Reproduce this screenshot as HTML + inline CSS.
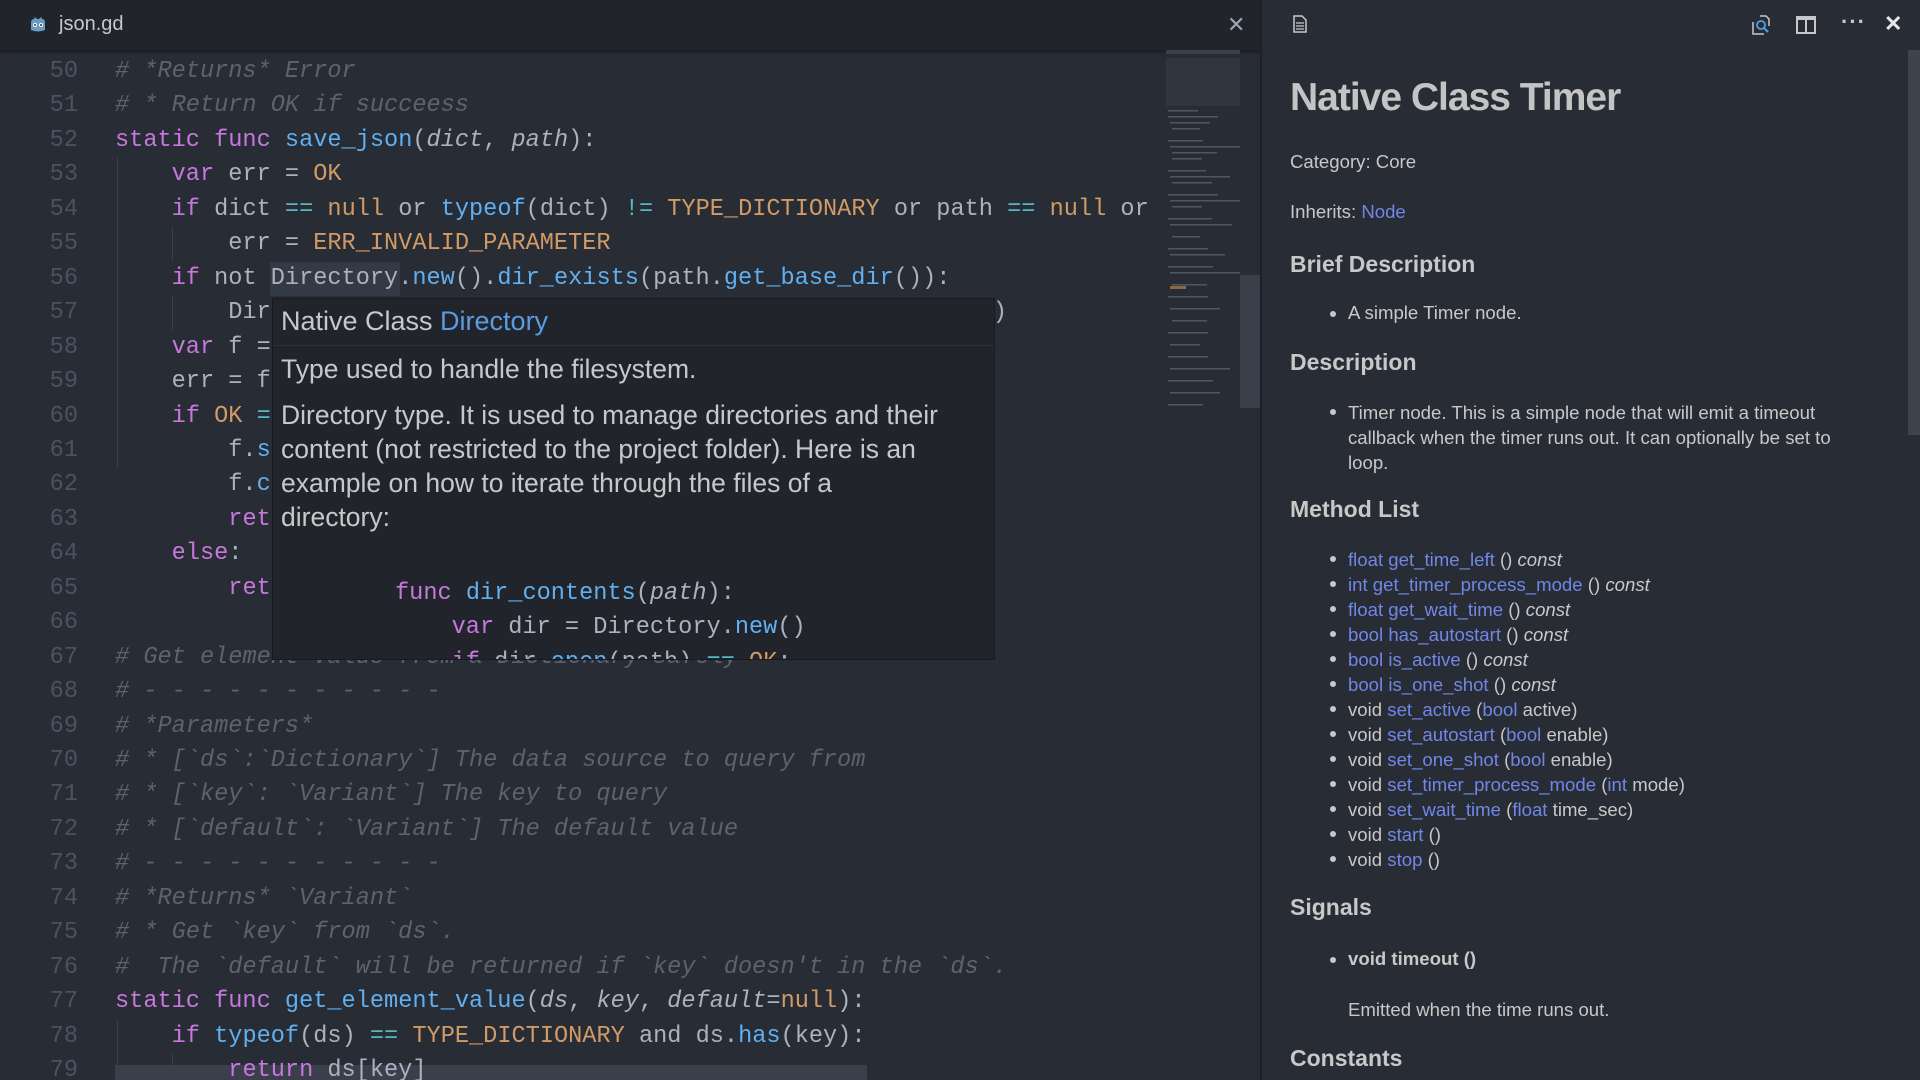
<!DOCTYPE html>
<html><head><meta charset="utf-8"><style>
*{margin:0;padding:0;box-sizing:border-box}
body{width:1920px;height:1080px;background:#282c34;overflow:hidden;position:relative;font-family:"Liberation Sans",sans-serif}
.tabbar{position:absolute;left:0;top:0;width:1260px;height:50px;background:#21252b;box-shadow:0 2px 3px #181a1f}
.code{position:absolute;left:0;top:55px;width:1166px;height:1025px;overflow:hidden;font-family:"Liberation Mono",monospace;font-size:23.6px;line-height:34.45px;color:#abb2bf;white-space:pre}
.ln{position:absolute;left:0;width:78px;text-align:right;color:#4b5263}
.tx{position:absolute;left:115px}
.c{color:#5c6370;font-style:italic}.k{color:#c678dd}.f{color:#61afef}.o{color:#d19a66}.p{font-style:italic}.op{color:#56b6c2}
.guide{position:absolute;width:1px;background:#3b4048}
.tip{position:absolute;left:272px;top:298px;width:723px;height:362px;background:#21252b;border:1px solid #181a1f;overflow:hidden;color:#c8c8c8}
.right{position:absolute;left:1260px;top:0;width:660px;height:1080px;background:#282c34;border-left:2px solid #1d2026;color:#c8c8c8;font-size:18.6px}
.r{position:absolute;left:28px;white-space:nowrap}
.h{font-size:23px;font-weight:bold;color:#c8c8c8}
.a{color:#7187e6}
.b::before{content:"";position:absolute;left:-18px;top:9px;width:6px;height:6px;border-radius:50%;background:#c8c8c8}
</style></head><body>
<div class="tabbar">
 <svg style="position:absolute;left:28px;top:15px" width="20" height="20" viewBox="0 0 20 20"><path d="M3 8 Q3 4 6 4 L7 2 L9 4 L11 4 L13 2 L14 4 Q17 4 17 8 L17 15 Q10 18 3 15Z" fill="#6a9bc4"/><circle cx="7" cy="10" r="2" fill="#fff"/><circle cx="13" cy="10" r="2" fill="#fff"/><circle cx="7" cy="10" r="1" fill="#333"/><circle cx="13" cy="10" r="1" fill="#333"/></svg>
 <div style="position:absolute;left:59px;top:13px;font-size:20px;color:#c8c8c8">json.gd</div>
 <div style="position:absolute;left:1227px;top:12px;font-size:22px;color:#9da5b4">✕</div>
</div>
<div class="code">
<div class="guide" style="left:117px;top:103px;height:310px"></div>
<div class="guide" style="left:172px;top:172px;height:34px"></div>
<div class="guide" style="left:172px;top:241px;height:34px"></div>
<div class="guide" style="left:117px;top:965px;height:62px"></div>
<div class="guide" style="left:172px;top:999px;height:34px"></div>
<div style="position:absolute;left:270px;top:207px;width:130px;height:34px;background:#343a45"></div>
<div style="position:absolute;left:115px;top:1010px;width:752px;height:20px;background:#3a3f4b"></div>
<div class="ln" style="top:0">50</div><div class="tx c" style="top:0"># *Returns* Error</div>
<div class="ln" style="top:34.45px">51</div><div class="tx c" style="top:34.45px"># * Return OK if succeess</div>
<div class="ln" style="top:68.9px">52</div><div class="tx" style="top:68.9px"><span class="k">static func</span> <span class="f">save_json</span>(<span class="p">dict</span>, <span class="p">path</span>):</div>
<div class="ln" style="top:103.35px">53</div><div class="tx" style="top:103.35px">    <span class="k">var</span> err = <span class="o">OK</span></div>
<div class="ln" style="top:137.8px">54</div><div class="tx" style="top:137.8px">    <span class="k">if</span> dict <span class="op">==</span> <span class="o">null</span> or <span class="f">typeof</span>(dict) <span class="op">!=</span> <span class="o">TYPE_DICTIONARY</span> or path <span class="op">==</span> <span class="o">null</span> or</div>
<div class="ln" style="top:172.25px">55</div><div class="tx" style="top:172.25px">        err = <span class="o">ERR_INVALID_PARAMETER</span></div>
<div class="ln" style="top:206.7px">56</div><div class="tx" style="top:206.7px">    <span class="k">if</span> not Directory.<span class="f">new</span>().<span class="f">dir_exists</span>(path.<span class="f">get_base_dir</span>()):</div>
<div class="ln" style="top:241.15px">57</div><div class="tx" style="top:241.15px">        Directory.new().make_dir_recursive(path.get_base_dir())</div>
<div class="ln" style="top:275.6px">58</div><div class="tx" style="top:275.6px">    <span class="k">var</span> f = File.new()</div>
<div class="ln" style="top:310.05px">59</div><div class="tx" style="top:310.05px">    err = f.open(path, File.WRITE)</div>
<div class="ln" style="top:344.5px">60</div><div class="tx" style="top:344.5px">    <span class="k">if</span> <span class="o">OK</span> <span class="op">==</span> err:</div>
<div class="ln" style="top:378.95px">61</div><div class="tx" style="top:378.95px">        f.<span class="f">store_string</span>()</div>
<div class="ln" style="top:413.4px">62</div><div class="tx" style="top:413.4px">        f.<span class="f">close</span>()</div>
<div class="ln" style="top:447.85px">63</div><div class="tx" style="top:447.85px">        <span class="k">return</span> OK</div>
<div class="ln" style="top:482.3px">64</div><div class="tx" style="top:482.3px">    <span class="k">else</span>:</div>
<div class="ln" style="top:516.75px">65</div><div class="tx" style="top:516.75px">        <span class="k">return</span> err</div>
<div class="ln" style="top:551.2px">66</div>
<div class="ln" style="top:585.65px">67</div><div class="tx c" style="top:585.65px"># Get element value from a Dictionary safely</div>
<div class="ln" style="top:620.1px">68</div><div class="tx c" style="top:620.1px"># - - - - - - - - - - -</div>
<div class="ln" style="top:654.55px">69</div><div class="tx c" style="top:654.55px"># *Parameters*</div>
<div class="ln" style="top:689px">70</div><div class="tx c" style="top:689px"># * [`ds`:`Dictionary`] The data source to query from</div>
<div class="ln" style="top:723.45px">71</div><div class="tx c" style="top:723.45px"># * [`key`: `Variant`] The key to query</div>
<div class="ln" style="top:757.9px">72</div><div class="tx c" style="top:757.9px"># * [`default`: `Variant`] The default value</div>
<div class="ln" style="top:792.35px">73</div><div class="tx c" style="top:792.35px"># - - - - - - - - - - -</div>
<div class="ln" style="top:826.8px">74</div><div class="tx c" style="top:826.8px"># *Returns* `Variant`</div>
<div class="ln" style="top:861.25px">75</div><div class="tx c" style="top:861.25px"># * Get `key` from `ds`.</div>
<div class="ln" style="top:895.7px">76</div><div class="tx c" style="top:895.7px">#  The `default` will be returned if `key` doesn't in the `ds`.</div>
<div class="ln" style="top:930.15px">77</div><div class="tx" style="top:930.15px"><span class="k">static func</span> <span class="f">get_element_value</span>(<span class="p">ds</span>, <span class="p">key</span>, <span class="p">default</span>=<span class="o">null</span>):</div>
<div class="ln" style="top:964.6px">78</div><div class="tx" style="top:964.6px">    <span class="k">if</span> <span class="f">typeof</span>(ds) <span class="op">==</span> <span class="o">TYPE_DICTIONARY</span> and ds.<span class="f">has</span>(key):</div>
<div class="ln" style="top:999.05px">79</div><div class="tx" style="top:999.05px">        <span class="k">return</span> ds[key]</div>
</div>
<div class="tip">
 <div style="position:absolute;left:8px;top:7px;font-size:27px;white-space:nowrap">Native Class <span style="color:#5b9be0">Directory</span></div>
 <div style="position:absolute;left:0;top:46px;width:100%;height:1px;background:#2c313a"></div>
 <div style="position:absolute;left:8px;top:55px;font-size:26.5px;white-space:nowrap">Type used to handle the filesystem.</div>
 <div style="position:absolute;left:8px;top:99px;font-size:26.5px;line-height:34px;width:700px">Directory type. It is used to manage directories and their content (not restricted to the project folder). Here is an example on how to iterate through the files of a<br>directory:</div>
 <div style="position:absolute;left:122px;top:278px;font-family:'Liberation Mono',monospace;font-size:23.6px;line-height:34.45px;white-space:pre;color:#abb2bf"><span class="k">func</span> <span class="f">dir_contents</span>(<span class="p">path</span>):
    <span class="k">var</span> dir = Directory.<span class="f">new</span>()
    <span class="k">if</span> dir.<span class="f">open</span>(path) <span class="op">==</span> <span class="o">OK</span>:</div>
</div>
<!-- minimap -->
<svg style="position:absolute;left:1166px;top:50px" width="74" height="410">
 <rect x="0" y="0" width="74" height="4" fill="#3a3f4b"/>
 <rect x="0" y="8" width="74" height="48" fill="#30353f"/>
 <g fill="#4f5664">
  <rect x="2" y="60" width="30" height="1.5"/><rect x="2" y="66" width="50" height="1.5"/><rect x="4" y="72" width="40" height="1.5"/><rect x="6" y="78" width="28" height="1.5"/>
  <rect x="2" y="90" width="35" height="1.5"/><rect x="4" y="96" width="70" height="1.5"/><rect x="6" y="102" width="45" height="1.5"/><rect x="6" y="108" width="30" height="1.5"/>
  <rect x="2" y="120" width="38" height="1.5"/><rect x="4" y="126" width="60" height="1.5"/><rect x="6" y="132" width="40" height="1.5"/><rect x="2" y="144" width="50" height="1.5"/>
  <rect x="4" y="150" width="70" height="1.5"/><rect x="6" y="156" width="30" height="1.5"/><rect x="2" y="168" width="44" height="1.5"/><rect x="4" y="174" width="62" height="1.5"/>
  <rect x="6" y="186" width="28" height="1.5"/><rect x="2" y="198" width="40" height="1.5"/><rect x="4" y="204" width="55" height="1.5"/><rect x="2" y="216" width="45" height="1.5"/>
  <rect x="4" y="222" width="70" height="1.5"/><rect x="6" y="234" width="35" height="1.5"/><rect x="2" y="246" width="40" height="1.5"/><rect x="4" y="258" width="50" height="1.5"/>
  <rect x="6" y="270" width="35" height="1.5"/><rect x="2" y="282" width="40" height="1.5"/><rect x="4" y="294" width="30" height="1.5"/><rect x="2" y="306" width="40" height="1.5"/>
  <rect x="4" y="318" width="60" height="1.5"/><rect x="2" y="330" width="45" height="1.5"/><rect x="4" y="342" width="50" height="1.5"/><rect x="2" y="354" width="35" height="1.5"/>
 </g>
 <rect x="4" y="236" width="16" height="3" fill="#8a6a40"/>
</svg>
<div style="position:absolute;left:1240px;top:275px;width:20px;height:133px;background:#3a3f4b"></div>
<div class="right">
 <svg style="position:absolute;left:30px;top:15px" width="16" height="18" viewBox="0 0 16 18"><path d="M2 1 H10 L14 5 V17 H2 Z" fill="none" stroke="#c8c8c8" stroke-width="1.5"/><path d="M4 8 H12 M4 11 H12 M4 14 H12" stroke="#c8c8c8" stroke-width="1.3"/></svg>
 <svg style="position:absolute;left:488px;top:14px" width="22" height="22" viewBox="0 0 22 22"><path d="M3 8 V20 H14 M10 2 H16 L19 5 V12" fill="none" stroke="#c8c8c8" stroke-width="1.5"/><circle cx="11" cy="11" r="4" fill="none" stroke="#4aa0e8" stroke-width="1.8"/><path d="M14 14 L18 18" stroke="#4aa0e8" stroke-width="2"/></svg>
 <svg style="position:absolute;left:534px;top:16px" width="20" height="18" viewBox="0 0 20 18"><rect x="1" y="1" width="18" height="16" fill="none" stroke="#c8c8c8" stroke-width="2"/><path d="M10 1 V17" stroke="#c8c8c8" stroke-width="2"/><path d="M1 3 H19" stroke="#c8c8c8" stroke-width="2"/></svg>
 <div style="position:absolute;left:579px;top:9px;font-size:22px;color:#c8c8c8;letter-spacing:1px;font-weight:bold">···</div>
 <div style="position:absolute;left:622px;top:11px;font-size:22px;color:#e8e8e8;font-weight:bold">✕</div>
 <div style="position:absolute;left:646px;top:50px;width:14px;height:385px;background:#3e434d"></div>
 <div class="r" style="top:76px;font-size:39px;font-weight:bold;color:#c4c4c4;letter-spacing:-1px">Native Class Timer</div>
 <div class="r" style="top:151px">Category: Core</div>
 <div class="r" style="top:201px">Inherits: <span class="a">Node</span></div>
 <div class="r h" style="top:251px">Brief Description</div>
 <div class="r b" style="left:86px;top:302px">A simple Timer node.</div>
 <div class="r h" style="top:349px">Description</div>
 <div class="r b" style="left:86px;top:400px;white-space:normal;width:520px;line-height:25px">Timer node. This is a simple node that will emit a timeout callback when the timer runs out. It can optionally be set to loop.</div>
 <div class="r h" style="top:496px">Method List</div>
 <div style="position:absolute;left:86px;top:547px;line-height:25px;white-space:nowrap">
  <div class="b" style="position:relative"><span class="a">float get_time_left</span> () <i>const</i></div>
  <div class="b" style="position:relative"><span class="a">int get_timer_process_mode</span> () <i>const</i></div>
  <div class="b" style="position:relative"><span class="a">float get_wait_time</span> () <i>const</i></div>
  <div class="b" style="position:relative"><span class="a">bool has_autostart</span> () <i>const</i></div>
  <div class="b" style="position:relative"><span class="a">bool is_active</span> () <i>const</i></div>
  <div class="b" style="position:relative"><span class="a">bool is_one_shot</span> () <i>const</i></div>
  <div class="b" style="position:relative">void <span class="a">set_active</span> (<span class="a">bool</span> active)</div>
  <div class="b" style="position:relative">void <span class="a">set_autostart</span> (<span class="a">bool</span> enable)</div>
  <div class="b" style="position:relative">void <span class="a">set_one_shot</span> (<span class="a">bool</span> enable)</div>
  <div class="b" style="position:relative">void <span class="a">set_timer_process_mode</span> (<span class="a">int</span> mode)</div>
  <div class="b" style="position:relative">void <span class="a">set_wait_time</span> (<span class="a">float</span> time_sec)</div>
  <div class="b" style="position:relative">void <span class="a">start</span> ()</div>
  <div class="b" style="position:relative">void <span class="a">stop</span> ()</div>
 </div>
 <div class="r h" style="top:894px">Signals</div>
 <div class="r b" style="left:86px;top:948px;font-weight:bold">void timeout ()</div>
 <div class="r" style="left:86px;top:999px">Emitted when the time runs out.</div>
 <div class="r h" style="top:1045px">Constants</div>
</div>
</body></html>
